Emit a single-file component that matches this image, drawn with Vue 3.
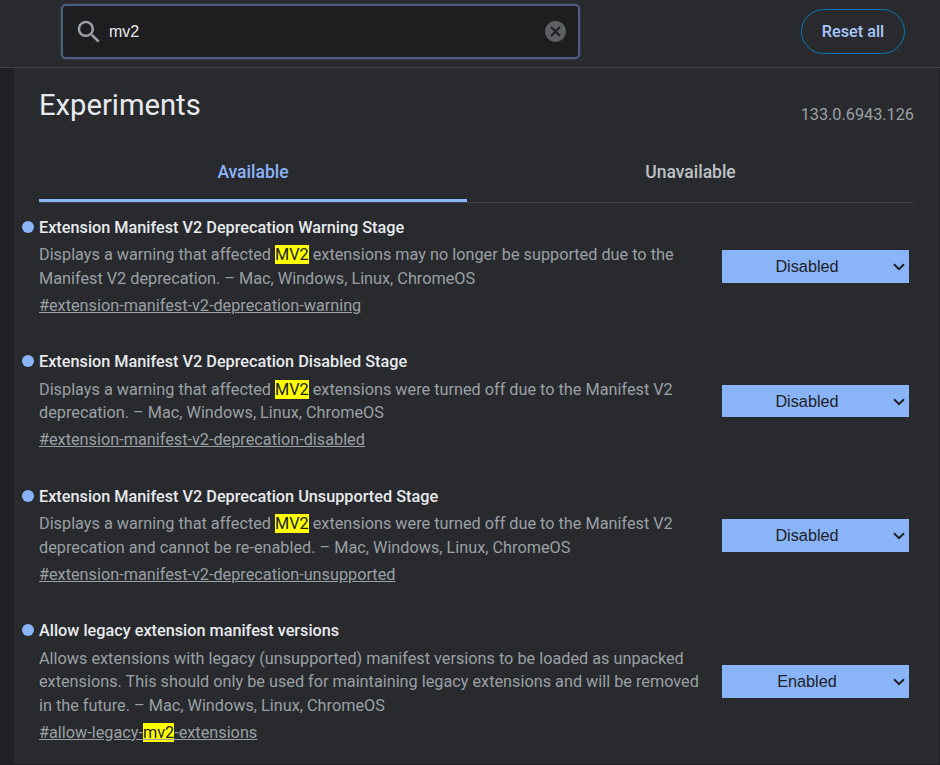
<script setup>
import { ref } from 'vue'

const query = ref('mv2')

const flags = [
  {
    title: 'Extension Manifest V2 Deprecation Warning Stage',
    lines: [
      [{ t: 'Displays a warning that affected ' }, { t: 'MV2', hit: true }, { t: ' extensions may no longer be supported due to the' }],
      [{ t: 'Manifest V2 deprecation. – Mac, Windows, Linux, ChromeOS' }],
    ],
    link: [{ t: '#extension-manifest-v2-deprecation-warning' }],
    state: 'Disabled',
  },
  {
    title: 'Extension Manifest V2 Deprecation Disabled Stage',
    lines: [
      [{ t: 'Displays a warning that affected ' }, { t: 'MV2', hit: true }, { t: ' extensions were turned off due to the Manifest V2' }],
      [{ t: 'deprecation. – Mac, Windows, Linux, ChromeOS' }],
    ],
    link: [{ t: '#extension-manifest-v2-deprecation-disabled' }],
    state: 'Disabled',
  },
  {
    title: 'Extension Manifest V2 Deprecation Unsupported Stage',
    lines: [
      [{ t: 'Displays a warning that affected ' }, { t: 'MV2', hit: true }, { t: ' extensions were turned off due to the Manifest V2' }],
      [{ t: 'deprecation and cannot be re-enabled. – Mac, Windows, Linux, ChromeOS' }],
    ],
    link: [{ t: '#extension-manifest-v2-deprecation-unsupported' }],
    state: 'Disabled',
  },
  {
    title: 'Allow legacy extension manifest versions',
    lines: [
      [{ t: 'Allows extensions with legacy (unsupported) manifest versions to be loaded as unpacked' }],
      [{ t: 'extensions. This should only be used for maintaining legacy extensions and will be removed' }],
      [{ t: 'in the future. – Mac, Windows, Linux, ChromeOS' }],
    ],
    link: [{ t: '#allow-legacy-' }, { t: 'mv2', hit: true }, { t: '-extensions' }],
    state: 'Enabled',
  },
]
</script>

<template>
  <div class="page">
    <header class="topbar">
      <div class="search">
        <svg class="glass" viewBox="0 0 24 24">
          <path d="M15.5 14h-.79l-.28-.27C15.41 12.59 16 11.11 16 9.5 16 5.91 13.09 3 9.5 3S3 5.91 3 9.5 5.91 16 9.5 16c1.61 0 3.09-.59 4.23-1.57l.27.28v.79l5 4.99L20.49 19l-4.99-5zm-6 0C7.01 14 5 11.99 5 9.5S7.01 5 9.5 5 14 7.01 14 9.5 11.99 14 9.5 14z" />
        </svg>
        <input v-model="query" class="query" type="text" aria-label="Search flags" />
        <svg class="clear" viewBox="0 0 24 24">
          <path d="M12 2C6.47 2 2 6.47 2 12s4.47 10 10 10 10-4.47 10-10S17.53 2 12 2zm5 13.59L15.59 17 12 13.41 8.41 17 7 15.59 10.59 12 7 8.41 8.41 7 12 10.59 15.59 7 17 8.41 13.41 12 17 15.59z" />
        </svg>
      </div>
      <button class="reset">Reset all</button>
    </header>

    <main class="panel">
      <div class="heading">
        <h1>Experiments</h1>
        <span class="version">133.0.6943.126</span>
      </div>
      <nav class="tabs">
        <div class="tab active">Available</div>
        <div class="tab">Unavailable</div>
      </nav>
      <section class="flags">
        <article v-for="flag in flags" :key="flag.title" class="flag">
          <div class="info">
            <h2><i class="dot"></i>{{ flag.title }}</h2>
            <p>
              <span v-for="(line, i) in flag.lines" :key="i" class="line"><span v-for="(part, j) in line" :key="j" :class="{ hit: part.hit }">{{ part.t }}</span></span>
            </p>
            <a><span v-for="(part, j) in flag.link" :key="j" :class="{ hit: part.hit }">{{ part.t }}</span></a>
          </div>
          <div class="select">
            <span>{{ flag.state }}</span>
            <svg class="chevron" viewBox="0 0 12 8"><path d="M1 1.2 L6 6.2 L11 1.2" /></svg>
          </div>
        </article>
      </section>
    </main>
  </div>
</template>

<style>
body {
  background: #202124;
}
</style>

<style scoped>
* {
  box-sizing: border-box;
}
.page {
  width: 940px;
  height: 765px;
  overflow: hidden;
  background: #202124;
  font-family: Roboto, sans-serif;
  font-size: 16.25px;
  line-height: 23.56px;
  color: #9aa0a6;
  border-bottom: 1px solid #231f20;
}
.topbar {
  height: 68px;
  padding: 4px 35px 0 61px;
  display: flex;
  align-items: flex-start;
  justify-content: space-between;
  background: #292a2d;
  border-bottom: 1px solid #3f4044;
}
.search {
  width: 519px;
  height: 55px;
  padding: 0 10px;
  display: flex;
  align-items: center;
  background: #1e1e20;
  border: 2px solid #4d5f80;
  border-radius: 5px;
  box-shadow: 0 0 0 0.6px rgba(77, 95, 128, 0.45);
}
.glass {
  width: 30px;
  height: 30px;
  margin-left: 1px;
  fill: #9aa0a6;
}
.query {
  flex: 1;
  min-width: 0;
  margin-left: 5px;
  padding: 0;
  border: 0;
  outline: 0;
  background: transparent;
  color: #e8eaed;
  font-family: "Liberation Sans", sans-serif;
  font-size: 16px;
}
.clear {
  width: 25px;
  height: 25px;
  fill: #5f6063;
}
.reset {
  width: 104px;
  height: 45px;
  margin-top: 5px;
  padding: 0;
  border: 1px solid #0b76b7;
  border-radius: 23px;
  background: transparent;
  color: #a8c7fa;
  font-family: Roboto, sans-serif;
  font-size: 16.25px;
  font-weight: 500;
}
.panel {
  height: 697px;
  margin: 0 1px 0 14px;
  padding: 0 25px;
  background: #292a2d;
}
.heading {
  height: 74px;
  display: flex;
  justify-content: space-between;
}
h1 {
  margin: 18px 0 0;
  font-size: 29.2px;
  line-height: 38px;
  font-weight: 400;
  color: #e8eaed;
}
.version {
  margin-top: 35px;
}
.tabs {
  height: 61px;
  display: grid;
  grid-template-columns: 428px 1fr;
  border-bottom: 1px solid #3f4044;
}
.tab {
  padding-top: 19px;
  text-align: center;
  font-size: 17.5px;
  font-weight: 500;
  color: #bdc1c6;
  border-bottom: 3px solid transparent;
}
.tab.active {
  color: #8ab4f8;
  border-bottom-color: #8ab4f8;
  border-radius: 2px 2px 0 0;
}
.flags {
  padding: 12.9px 5px 0 0;
  display: flex;
  flex-direction: column;
  gap: 32.7px;
}
.flag {
  display: flex;
  align-items: center;
  justify-content: space-between;
}
.info {
  display: flex;
  flex-direction: column;
  align-items: flex-start;
  gap: 3.75px;
}
h2 {
  display: flex;
  align-items: center;
  margin: 0 0 0 -17px;
  font-size: 16.25px;
  line-height: 23.56px;
  font-weight: 500;
  color: #e8eaed;
}
.dot {
  width: 12px;
  height: 12px;
  margin: -2px 5px 0 0;
  border-radius: 50%;
  background: #8ab4f8;
}
p {
  margin: 0;
}
.line {
  display: block;
  white-space: pre;
}
.info a {
  margin: -0.15px 0 0.15px;
  text-decoration: underline;
}
.hit {
  background: #ff0;
  color: #202124;
}
.select {
  position: relative;
  width: 187px;
  height: 32.5px;
  margin-bottom: 0.3px;
  padding: 1px 17px 0 0;
  display: flex;
  align-items: center;
  justify-content: center;
  background: #8ab4f8;
  color: #202124;
  font-family: "Liberation Sans", sans-serif;
}
.chevron {
  position: absolute;
  right: 4px;
  top: 13px;
  width: 12px;
  height: 8px;
  fill: none;
  stroke: #202124;
  stroke-width: 2;
}
</style>
